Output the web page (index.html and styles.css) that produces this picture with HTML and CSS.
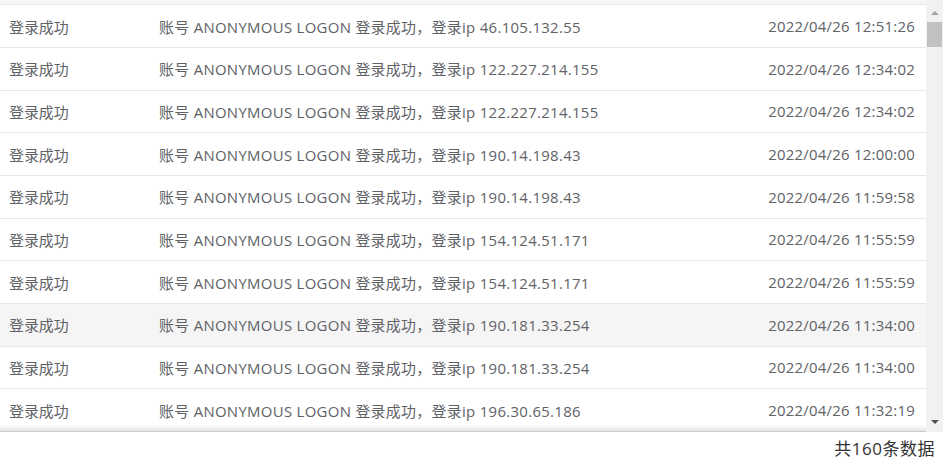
FILE: index.html
```html
<!DOCTYPE html>
<html lang="zh">
<head>
<meta charset="utf-8">
<link rel="stylesheet" href="styles.css">
</head>
<body>
<div class="wrap">
  <div class="table">
    <div class="partial"></div>
    <div class="row"><span class="c1">登录成功</span><span class="c2">账号 ANONYMOUS LOGON 登录成功，登录ip 46.105.132.55</span><span class="c3">2022/04/26 12:51:26</span></div>
    <div class="row"><span class="c1">登录成功</span><span class="c2">账号 ANONYMOUS LOGON 登录成功，登录ip 122.227.214.155</span><span class="c3">2022/04/26 12:34:02</span></div>
    <div class="row"><span class="c1">登录成功</span><span class="c2">账号 ANONYMOUS LOGON 登录成功，登录ip 122.227.214.155</span><span class="c3">2022/04/26 12:34:02</span></div>
    <div class="row"><span class="c1">登录成功</span><span class="c2">账号 ANONYMOUS LOGON 登录成功，登录ip 190.14.198.43</span><span class="c3">2022/04/26 12:00:00</span></div>
    <div class="row"><span class="c1">登录成功</span><span class="c2">账号 ANONYMOUS LOGON 登录成功，登录ip 190.14.198.43</span><span class="c3">2022/04/26 11:59:58</span></div>
    <div class="row"><span class="c1">登录成功</span><span class="c2">账号 ANONYMOUS LOGON 登录成功，登录ip 154.124.51.171</span><span class="c3">2022/04/26 11:55:59</span></div>
    <div class="row"><span class="c1">登录成功</span><span class="c2">账号 ANONYMOUS LOGON 登录成功，登录ip 154.124.51.171</span><span class="c3">2022/04/26 11:55:59</span></div>
    <div class="row hover"><span class="c1">登录成功</span><span class="c2">账号 ANONYMOUS LOGON 登录成功，登录ip 190.181.33.254</span><span class="c3">2022/04/26 11:34:00</span></div>
    <div class="row"><span class="c1">登录成功</span><span class="c2">账号 ANONYMOUS LOGON 登录成功，登录ip 190.181.33.254</span><span class="c3">2022/04/26 11:34:00</span></div>
    <div class="row"><span class="c1">登录成功</span><span class="c2">账号 ANONYMOUS LOGON 登录成功，登录ip 196.30.65.186</span><span class="c3">2022/04/26 11:32:19</span></div>
    <div class="shadow"></div>
  </div>
  <div class="scrollbar">
    <div class="arrow up"></div>
    <div class="thumb"></div>
    <div class="track"></div>
    <div class="arrow down"></div>
  </div>
</div>
<div class="footer">共160条数据</div>
</body>
</html>
```

FILE: styles.css
```css
html, body {
  margin: 0;
  padding: 0;
  background: #fff;
}
body {
  font-family: "Open Sans", "Noto Sans CJK SC", sans-serif;
  font-size: 14.93px;
  color: #606266;
}
.wrap {
  display: flex;
  width: 943px;
  height: 432px;
}
.table {
  flex: 1;
  display: flex;
  flex-direction: column;
  overflow: hidden;
  background: #fff;
  position: relative;
}
.partial {
  flex: none;
  height: 5.33px;
  box-sizing: border-box;
  background: #f5f5f5;
  border-bottom: 1px solid #e4e7ed;
}
.row {
  flex: none;
  height: 42.67px;
  box-sizing: border-box;
  border-bottom: 1px solid #e4e7ed;
  display: grid;
  grid-template-columns: 150px 1fr auto;
  align-items: center;
  padding: 0 11px 0 9px;
  white-space: nowrap;
  letter-spacing: 0.31px;
}
.row.hover {
  background: #f5f5f5;
}
.c1 { letter-spacing: 0; }
.c3 { text-align: right; letter-spacing: 0.25px; }
.shadow {
  position: absolute;
  left: 0;
  right: 0;
  bottom: 0;
  height: 7px;
  background: linear-gradient(to bottom, rgba(0,0,0,0), rgba(0,0,0,0.12));
}
.scrollbar {
  width: 17px;
  flex: none;
  background: #f1f1f1;
  display: flex;
  flex-direction: column;
  align-items: center;
}
.arrow {
  width: 0;
  height: 0;
  flex: none;
  margin: 7px 0;
  border-left: 4px solid transparent;
  border-right: 4px solid transparent;
}
.arrow.up {
  border-bottom: 4px solid #a3a3a3;
  margin-top: 11px;
}
.arrow.down {
  border-top: 4px solid #505050;
  margin-bottom: 8px;
}
.thumb {
  width: 15px;
  height: 25px;
  flex: none;
  background: #c1c1c1;
}
.track { flex: 1; }
.footer {
  height: 30px;
  display: flex;
  justify-content: flex-end;
  align-items: center;
  padding-right: 16px;
  font-family: "Open Sans", "Noto Sans CJK SC", sans-serif;
  font-size: 17px;
  letter-spacing: 0.5px;
  color: #333;
}
```
